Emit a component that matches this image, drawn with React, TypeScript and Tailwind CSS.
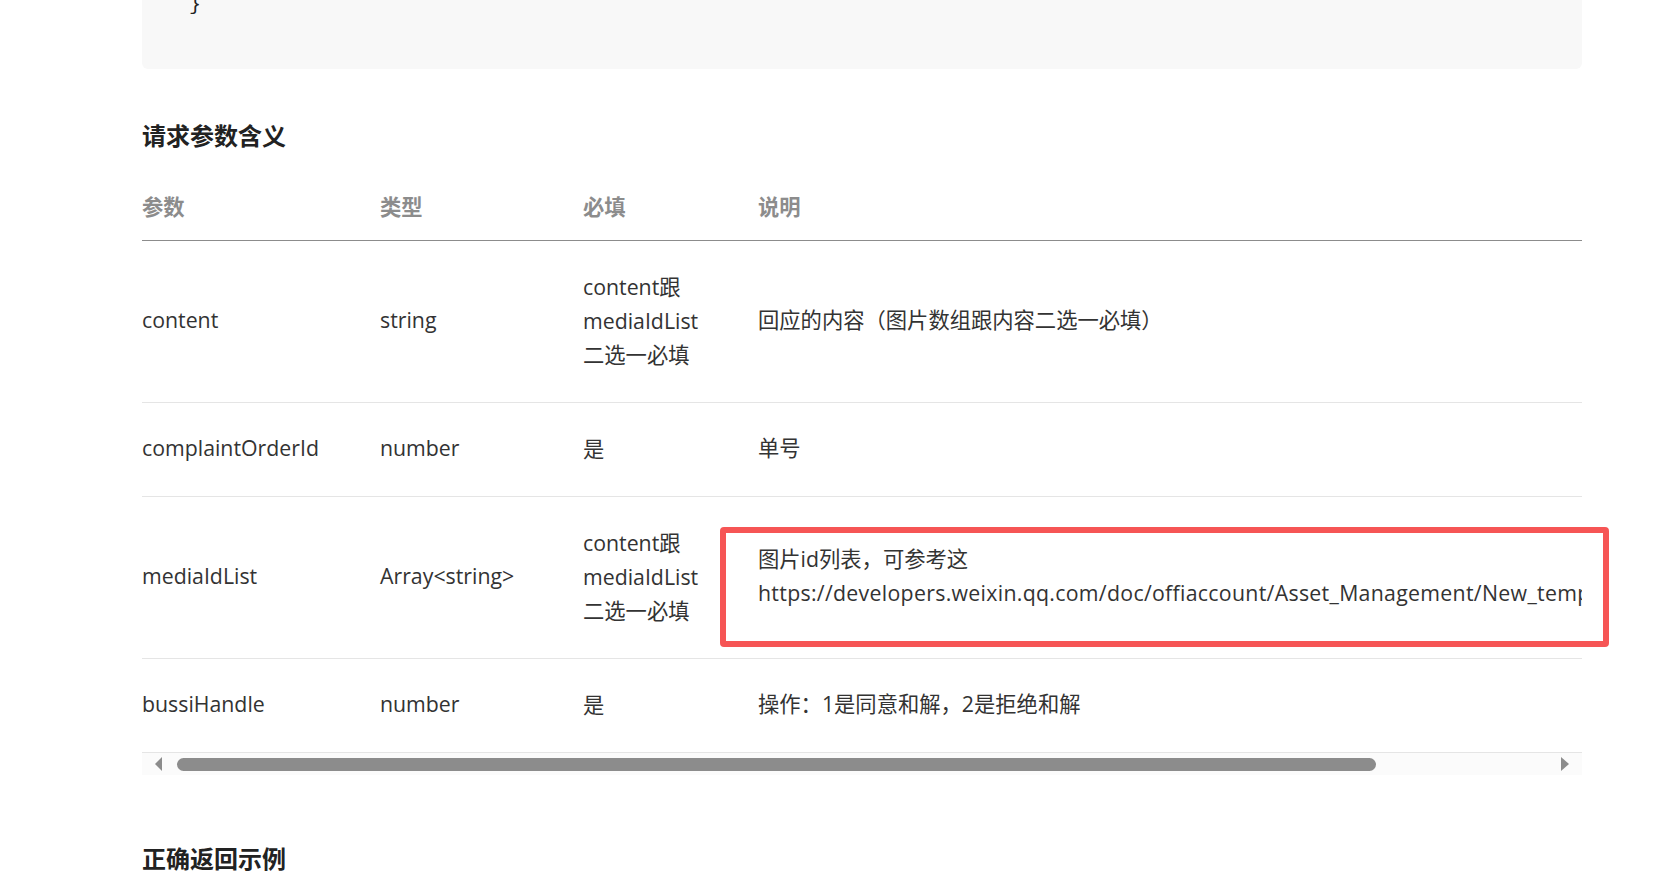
const rows = [
  {
    name: "content",
    type: "string",
    required: ["content跟", "mediaIdList", "二选一必填"],
    desc: ["回应的内容（图片数组跟内容二选一必填）"],
  },
  {
    name: "complaintOrderId",
    type: "number",
    required: ["是"],
    desc: ["单号"],
  },
  {
    name: "mediaIdList",
    type: "Array<string>",
    required: ["content跟", "mediaIdList", "二选一必填"],
    desc: [
      "图片id列表，可参考这",
      "https://developers.weixin.qq.com/doc/offiaccount/Asset_Management/New_temporary_materials.html",
    ],
  },
  {
    name: "bussiHandle",
    type: "number",
    required: ["是"],
    desc: ["操作：1是同意和解，2是拒绝和解"],
  },
];

function Lines({ lines }: { lines: string[] }) {
  return (
    <>
      {lines.map((l, i) => (
        <div key={i} className={l.startsWith("http") ? "tracking-[0.3px]" : ""}>
          {l}
        </div>
      ))}
    </>
  );
}

export default function App() {
  return (
    <main className="relative h-[885px] w-full overflow-hidden bg-white font-['Open_Sans','Noto_Sans_CJK_SC',sans-serif]">
      <div className="ml-[142px] w-[1440px]">

        {/* tail of the code block above */}
        <div className="h-[69px] overflow-hidden rounded-b-[6px] bg-[#f8f8f8] pl-[23px]">
          <pre className="-mt-[9px] font-['Liberation_Mono',monospace] text-[20px] leading-[28px] text-[#222]">
            {"  }"}
          </pre>
        </div>

        <h2 className="mt-[48px] font-['Noto_Sans_CJK_SC',sans-serif] text-[24px] font-bold leading-[36px] text-[#222]">
          请求参数含义
        </h2>

        <div className="mt-[22px] overflow-hidden">
          <table className="w-max border-collapse text-[21.3px] leading-[34px] text-[#333]">
            <thead>
              <tr className="border-b border-[#8c8c8c] text-left font-['Noto_Sans_CJK_SC',sans-serif] font-bold text-[#8c8c8c]">
                <th className="w-[238px] pt-[14px] pb-[17px] text-left font-bold">参数</th>
                <th className="w-[203px] pt-[14px] pb-[17px] text-left font-bold">类型</th>
                <th className="w-[175px] pt-[14px] pb-[17px] text-left font-bold">必填</th>
                <th className="pt-[14px] pb-[17px] text-left font-bold">说明</th>
              </tr>
            </thead>
            <tbody>
              {rows.map((r) => (
                <tr key={r.name} className="border-b border-[#e5e5e5]">
                  <td className="pt-[28px] pb-[31px]">{r.name}</td>
                  <td className="pt-[28px] pb-[31px]">{r.type}</td>
                  <td className="pt-[29px] pb-[30px]">
                    <Lines lines={r.required} />
                  </td>
                  <td className="whitespace-nowrap pt-[28px] pb-[31px] pr-[40px]">
                    <Lines lines={r.desc} />
                  </td>
                </tr>
              ))}
            </tbody>
          </table>
        </div>

        {/* horizontal scrollbar */}
        <div className="flex h-[22px] items-center bg-[#fbfbfb]">
          <div className="ml-[13px] h-0 w-0 border-y-[7px] border-r-[7px] border-y-transparent border-r-[#8c8c8c]" />
          <div className="ml-[15px] h-[13px] w-[1199px] rounded-full bg-[#8c8c8c]" />
          <div className="ml-auto mr-[13px] h-0 w-0 border-y-[7px] border-l-[8px] border-y-transparent border-l-[#8c8c8c]" />
        </div>

        <h2 className="mt-[65px] font-['Noto_Sans_CJK_SC',sans-serif] text-[24px] font-bold leading-[36px] text-[#222]">
          正确返回示例
        </h2>
      </div>

      {/* annotation box */}
      <div className="absolute left-[720px] top-[527px] h-[120px] w-[889px] rounded-[4px] border-[6px] border-[#f65555]" />
    </main>
  );
}
